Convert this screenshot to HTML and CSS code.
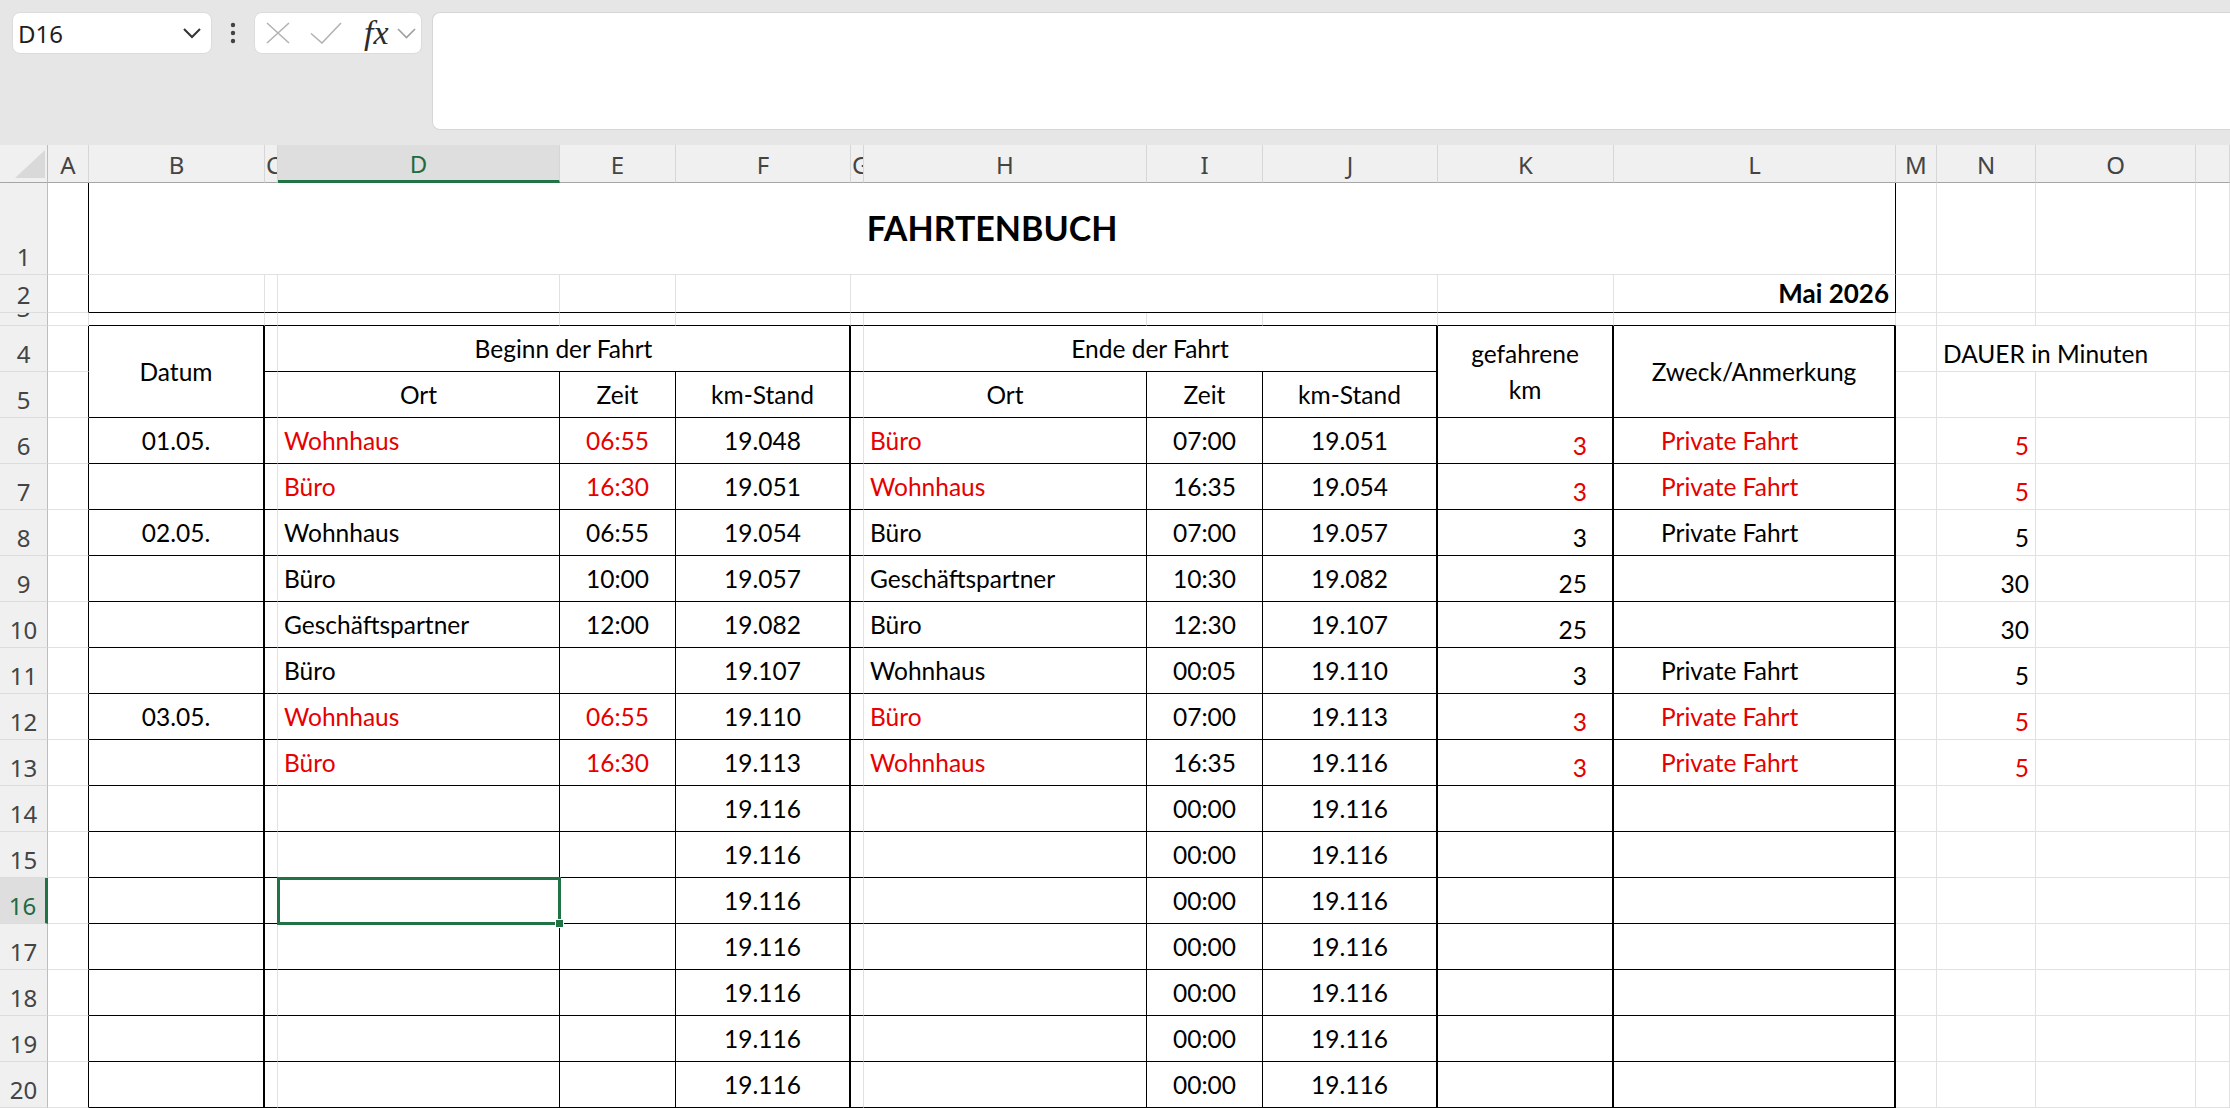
FILE: index.html
```html
<!DOCTYPE html>
<html lang="de">
<head>
    <meta charset="UTF-8">
    <meta name="viewport" content="width=device-width, initial-scale=1.0">
    <title>Fahrtenbuch</title>
    <link rel="stylesheet" href="styles.css">
</head>
<body>
    <!-- Formula bar -->
    <div class="toolbar">
        <div class="namebox">
            <span>D16</span>
            <svg width="20" height="12" viewBox="0 0 20 12"><path d="M2 2 L10 10 L18 2" fill="none" stroke="#333" stroke-width="2"/></svg>
        </div>
        <div class="grip">
            <svg width="6" height="22" viewBox="0 0 6 22"><circle cx="3" cy="3" r="2.2"/><circle cx="3" cy="11" r="2.2"/><circle cx="3" cy="19" r="2.2"/></svg>
        </div>
        <div class="fxbox">
            <svg class="ic-x" width="24" height="22" viewBox="0 0 24 22"><path d="M1 1 L23 21 M23 1 L1 21" fill="none" stroke="#b3b3b3" stroke-width="1.6"/></svg>
            <svg class="ic-ok" width="32" height="22" viewBox="0 0 32 22"><path d="M1 11.5 L12 21 L31 1" fill="none" stroke="#b3b3b3" stroke-width="1.6"/></svg>
            <span class="fx">fx</span>
            <svg class="ic-down" width="19" height="11" viewBox="0 0 19 11"><path d="M1 1 L9.5 9.5 L18 1" fill="none" stroke="#9e9e9e" stroke-width="1.6"/></svg>
        </div>
        <div class="formula"></div>
    </div>

    <!-- Sheet -->
    <div class="sheet">
        <!-- Column headers -->
        <div class="row">
            <div class="corner"><svg width="30" height="28" viewBox="0 0 30 28"><polygon points="30,0 30,28 0,28" fill="#d9d9d9"/></svg></div>
            <div class="ch">A</div>
            <div class="ch">B</div>
            <div class="ch narrow">C</div>
            <div class="ch active">D</div>
            <div class="ch">E</div>
            <div class="ch">F</div>
            <div class="ch narrow">G</div>
            <div class="ch">H</div>
            <div class="ch">I</div>
            <div class="ch">J</div>
            <div class="ch">K</div>
            <div class="ch">L</div>
            <div class="ch">M</div>
            <div class="ch">N</div>
            <div class="ch">O</div>
            <div class="ch"></div>
        </div>

        <!-- Row 1: title -->
        <div class="row">
            <div class="rh">1</div>
            <div class="c br"></div>
            <div class="c br span11 title">FAHRTENBUCH</div>
            <div class="c"></div>
            <div class="c"></div>
            <div class="c"></div>
            <div class="c"></div>
        </div>

        <!-- Row 2: month -->
        <div class="row">
            <div class="rh">2</div>
            <div class="c br"></div>
            <div class="c bb"></div>
            <div class="c bb"></div>
            <div class="c bb"></div>
            <div class="c bb"></div>
            <div class="c bb"></div>
            <div class="c bb span4"></div>
            <div class="c bb"></div>
            <div class="c bb br bot month">Mai 2026</div>
            <div class="c"></div>
            <div class="c"></div>
            <div class="c"></div>
            <div class="c"></div>
        </div>

        <!-- Row 3: spacer -->
        <div class="row">
            <div class="rh">3</div>
            <div class="c"></div>
            <div class="c bb"></div>
            <div class="c bb"></div>
            <div class="c bb"></div>
            <div class="c bb"></div>
            <div class="c bb"></div>
            <div class="c bb"></div>
            <div class="c bb"></div>
            <div class="c bb"></div>
            <div class="c bb"></div>
            <div class="c bb"></div>
            <div class="c bb"></div>
            <div class="c"></div>
            <div class="c"></div>
            <div class="c"></div>
            <div class="c"></div>
        </div>

        <!-- Row 4: group headers -->
        <div class="row">
            <div class="rh">4</div>
            <div class="c br"></div>
            <div class="c bb brw ctr tall">Datum</div>
            <div class="c bb"></div>
            <div class="c bb brw ctr span3">Beginn der Fahrt</div>
            <div class="c bb"></div>
            <div class="c bb brw ctr span3">Ende der Fahrt</div>
            <div class="c bb brw ctr tall wrap"><span>gefahrene<br>km</span></div>
            <div class="c bb brw ctr tall">Zweck/Anmerkung</div>
            <div class="c"></div>
            <div class="c bot span2">DAUER in Minuten</div>
            <div class="c"></div>
        </div>

        <!-- Row 5: column headers -->
        <div class="row">
            <div class="rh">5</div>
            <div class="c br"></div>
            <div class="c bb"></div>
            <div class="c bb br ctr">Ort</div>
            <div class="c bb br ctr">Zeit</div>
            <div class="c bb brw ctr">km-Stand</div>
            <div class="c bb"></div>
            <div class="c bb br ctr">Ort</div>
            <div class="c bb br ctr">Zeit</div>
            <div class="c bb brw ctr">km-Stand</div>
            <div class="c"></div>
            <div class="c"></div>
            <div class="c"></div>
            <div class="c"></div>
        </div>

        <!-- Row 6 -->
        <div class="row">
            <div class="rh">6</div>
            <div class="c br"></div>
            <div class="c bb brw ctr">01.05.</div>
            <div class="c bb"></div>
            <div class="c bb br red">Wohnhaus</div>
            <div class="c bb br ctr red">06:55</div>
            <div class="c bb brw ctr">19.048</div>
            <div class="c bb"></div>
            <div class="c bb br red">Büro</div>
            <div class="c bb br ctr">07:00</div>
            <div class="c bb brw ctr">19.051</div>
            <div class="c bb brw bot km red">3</div>
            <div class="c bb brw note red">Private Fahrt</div>
            <div class="c"></div>
            <div class="c bot rgt red">5</div>
            <div class="c"></div>
            <div class="c"></div>
        </div>

        <!-- Row 7 -->
        <div class="row">
            <div class="rh">7</div>
            <div class="c br"></div>
            <div class="c bb brw ctr"></div>
            <div class="c bb"></div>
            <div class="c bb br red">Büro</div>
            <div class="c bb br ctr red">16:30</div>
            <div class="c bb brw ctr">19.051</div>
            <div class="c bb"></div>
            <div class="c bb br red">Wohnhaus</div>
            <div class="c bb br ctr">16:35</div>
            <div class="c bb brw ctr">19.054</div>
            <div class="c bb brw bot km red">3</div>
            <div class="c bb brw note red">Private Fahrt</div>
            <div class="c"></div>
            <div class="c bot rgt red">5</div>
            <div class="c"></div>
            <div class="c"></div>
        </div>

        <!-- Row 8 -->
        <div class="row">
            <div class="rh">8</div>
            <div class="c br"></div>
            <div class="c bb brw ctr">02.05.</div>
            <div class="c bb"></div>
            <div class="c bb br">Wohnhaus</div>
            <div class="c bb br ctr">06:55</div>
            <div class="c bb brw ctr">19.054</div>
            <div class="c bb"></div>
            <div class="c bb br">Büro</div>
            <div class="c bb br ctr">07:00</div>
            <div class="c bb brw ctr">19.057</div>
            <div class="c bb brw bot km">3</div>
            <div class="c bb brw note">Private Fahrt</div>
            <div class="c"></div>
            <div class="c bot rgt">5</div>
            <div class="c"></div>
            <div class="c"></div>
        </div>

        <!-- Row 9 -->
        <div class="row">
            <div class="rh">9</div>
            <div class="c br"></div>
            <div class="c bb brw ctr"></div>
            <div class="c bb"></div>
            <div class="c bb br">Büro</div>
            <div class="c bb br ctr">10:00</div>
            <div class="c bb brw ctr">19.057</div>
            <div class="c bb"></div>
            <div class="c bb br">Geschäftspartner</div>
            <div class="c bb br ctr">10:30</div>
            <div class="c bb brw ctr">19.082</div>
            <div class="c bb brw bot km">25</div>
            <div class="c bb brw note"></div>
            <div class="c"></div>
            <div class="c bot rgt">30</div>
            <div class="c"></div>
            <div class="c"></div>
        </div>

        <!-- Row 10 -->
        <div class="row">
            <div class="rh">10</div>
            <div class="c br"></div>
            <div class="c bb brw ctr"></div>
            <div class="c bb"></div>
            <div class="c bb br">Geschäftspartner</div>
            <div class="c bb br ctr">12:00</div>
            <div class="c bb brw ctr">19.082</div>
            <div class="c bb"></div>
            <div class="c bb br">Büro</div>
            <div class="c bb br ctr">12:30</div>
            <div class="c bb brw ctr">19.107</div>
            <div class="c bb brw bot km">25</div>
            <div class="c bb brw note"></div>
            <div class="c"></div>
            <div class="c bot rgt">30</div>
            <div class="c"></div>
            <div class="c"></div>
        </div>

        <!-- Row 11 -->
        <div class="row">
            <div class="rh">11</div>
            <div class="c br"></div>
            <div class="c bb brw ctr"></div>
            <div class="c bb"></div>
            <div class="c bb br">Büro</div>
            <div class="c bb br ctr"></div>
            <div class="c bb brw ctr">19.107</div>
            <div class="c bb"></div>
            <div class="c bb br">Wohnhaus</div>
            <div class="c bb br ctr">00:05</div>
            <div class="c bb brw ctr">19.110</div>
            <div class="c bb brw bot km">3</div>
            <div class="c bb brw note">Private Fahrt</div>
            <div class="c"></div>
            <div class="c bot rgt">5</div>
            <div class="c"></div>
            <div class="c"></div>
        </div>

        <!-- Row 12 -->
        <div class="row">
            <div class="rh">12</div>
            <div class="c br"></div>
            <div class="c bb brw ctr">03.05.</div>
            <div class="c bb"></div>
            <div class="c bb br red">Wohnhaus</div>
            <div class="c bb br ctr red">06:55</div>
            <div class="c bb brw ctr">19.110</div>
            <div class="c bb"></div>
            <div class="c bb br red">Büro</div>
            <div class="c bb br ctr">07:00</div>
            <div class="c bb brw ctr">19.113</div>
            <div class="c bb brw bot km red">3</div>
            <div class="c bb brw note red">Private Fahrt</div>
            <div class="c"></div>
            <div class="c bot rgt red">5</div>
            <div class="c"></div>
            <div class="c"></div>
        </div>

        <!-- Row 13 -->
        <div class="row">
            <div class="rh">13</div>
            <div class="c br"></div>
            <div class="c bb brw ctr"></div>
            <div class="c bb"></div>
            <div class="c bb br red">Büro</div>
            <div class="c bb br ctr red">16:30</div>
            <div class="c bb brw ctr">19.113</div>
            <div class="c bb"></div>
            <div class="c bb br red">Wohnhaus</div>
            <div class="c bb br ctr">16:35</div>
            <div class="c bb brw ctr">19.116</div>
            <div class="c bb brw bot km red">3</div>
            <div class="c bb brw note red">Private Fahrt</div>
            <div class="c"></div>
            <div class="c bot rgt red">5</div>
            <div class="c"></div>
            <div class="c"></div>
        </div>

        <!-- Row 14 -->
        <div class="row">
            <div class="rh">14</div>
            <div class="c br"></div>
            <div class="c bb brw"></div>
            <div class="c bb"></div>
            <div class="c bb br"></div>
            <div class="c bb br"></div>
            <div class="c bb brw ctr">19.116</div>
            <div class="c bb"></div>
            <div class="c bb br"></div>
            <div class="c bb br ctr">00:00</div>
            <div class="c bb brw ctr">19.116</div>
            <div class="c bb brw"></div>
            <div class="c bb brw"></div>
            <div class="c"></div>
            <div class="c"></div>
            <div class="c"></div>
            <div class="c"></div>
        </div>

        <!-- Row 15 -->
        <div class="row">
            <div class="rh">15</div>
            <div class="c br"></div>
            <div class="c bb brw"></div>
            <div class="c bb"></div>
            <div class="c bb br"></div>
            <div class="c bb br"></div>
            <div class="c bb brw ctr">19.116</div>
            <div class="c bb"></div>
            <div class="c bb br"></div>
            <div class="c bb br ctr">00:00</div>
            <div class="c bb brw ctr">19.116</div>
            <div class="c bb brw"></div>
            <div class="c bb brw"></div>
            <div class="c"></div>
            <div class="c"></div>
            <div class="c"></div>
            <div class="c"></div>
        </div>

        <!-- Row 16 (selected cell D16) -->
        <div class="row">
            <div class="rh active">16</div>
            <div class="c br"></div>
            <div class="c bb brw"></div>
            <div class="c bb"></div>
            <div class="c bb br selected"><div class="selection"></div><div class="handle"></div></div>
            <div class="c bb br"></div>
            <div class="c bb brw ctr">19.116</div>
            <div class="c bb"></div>
            <div class="c bb br"></div>
            <div class="c bb br ctr">00:00</div>
            <div class="c bb brw ctr">19.116</div>
            <div class="c bb brw"></div>
            <div class="c bb brw"></div>
            <div class="c"></div>
            <div class="c"></div>
            <div class="c"></div>
            <div class="c"></div>
        </div>

        <!-- Row 17 -->
        <div class="row">
            <div class="rh">17</div>
            <div class="c br"></div>
            <div class="c bb brw"></div>
            <div class="c bb"></div>
            <div class="c bb br"></div>
            <div class="c bb br"></div>
            <div class="c bb brw ctr">19.116</div>
            <div class="c bb"></div>
            <div class="c bb br"></div>
            <div class="c bb br ctr">00:00</div>
            <div class="c bb brw ctr">19.116</div>
            <div class="c bb brw"></div>
            <div class="c bb brw"></div>
            <div class="c"></div>
            <div class="c"></div>
            <div class="c"></div>
            <div class="c"></div>
        </div>

        <!-- Row 18 -->
        <div class="row">
            <div class="rh">18</div>
            <div class="c br"></div>
            <div class="c bb brw"></div>
            <div class="c bb"></div>
            <div class="c bb br"></div>
            <div class="c bb br"></div>
            <div class="c bb brw ctr">19.116</div>
            <div class="c bb"></div>
            <div class="c bb br"></div>
            <div class="c bb br ctr">00:00</div>
            <div class="c bb brw ctr">19.116</div>
            <div class="c bb brw"></div>
            <div class="c bb brw"></div>
            <div class="c"></div>
            <div class="c"></div>
            <div class="c"></div>
            <div class="c"></div>
        </div>

        <!-- Row 19 -->
        <div class="row">
            <div class="rh">19</div>
            <div class="c br"></div>
            <div class="c bb brw"></div>
            <div class="c bb"></div>
            <div class="c bb br"></div>
            <div class="c bb br"></div>
            <div class="c bb brw ctr">19.116</div>
            <div class="c bb"></div>
            <div class="c bb br"></div>
            <div class="c bb br ctr">00:00</div>
            <div class="c bb brw ctr">19.116</div>
            <div class="c bb brw"></div>
            <div class="c bb brw"></div>
            <div class="c"></div>
            <div class="c"></div>
            <div class="c"></div>
            <div class="c"></div>
        </div>

        <!-- Row 20 -->
        <div class="row">
            <div class="rh">20</div>
            <div class="c br"></div>
            <div class="c bb brw"></div>
            <div class="c bb"></div>
            <div class="c bb br"></div>
            <div class="c bb br"></div>
            <div class="c bb brw ctr">19.116</div>
            <div class="c bb"></div>
            <div class="c bb br"></div>
            <div class="c bb br ctr">00:00</div>
            <div class="c bb brw ctr">19.116</div>
            <div class="c bb brw"></div>
            <div class="c bb brw"></div>
            <div class="c"></div>
            <div class="c"></div>
            <div class="c"></div>
            <div class="c"></div>
        </div>
    </div>
</body>
</html>
```

FILE: styles.css
```css
/* Basic reset */
* {
    margin: 0;
    padding: 0;
    box-sizing: border-box;
}

body {
    width: 2230px;
    height: 1108px;
    overflow: hidden;
    background-color: #FFFFFF;
    font-family: Lato, 'Liberation Sans', sans-serif;
}

/* Formula bar */
.toolbar {
    display: flex;
    align-items: flex-start;
    height: 145px;
    padding: 12px 0 0 12px;
    background-color: #E6E6E6;
}

.namebox {
    display: flex;
    align-items: center;
    justify-content: space-between;
    width: 200px;
    height: 42px;
    padding: 0 9px 0 5px;
    background-color: #FFFFFF;
    border: 1px solid #DCDCDC;
    border-radius: 8px;
    font-family: 'Noto Sans', sans-serif;
    font-size: 24px;
    color: #1F1F1F;
}

.grip {
    display: flex;
    align-items: center;
    justify-content: center;
    width: 42px;
    height: 42px;
    fill: #424242;
}

.fxbox {
    display: flex;
    align-items: center;
    width: 168px;
    height: 42px;
    padding-left: 11px;
    background-color: #FFFFFF;
    border: 1px solid #DCDCDC;
    border-radius: 8px;
}

.ic-ok {
    margin-left: 20px;
}

.fx {
    margin-left: 22px;
    font-family: 'Liberation Serif', serif;
    font-style: italic;
    font-size: 34px;
    line-height: 1;
    color: #2B2B2B;
}

.ic-down {
    margin-left: 8px;
}

.formula {
    flex: 1;
    height: 118px;
    margin-left: 10px;
    background-color: #FFFFFF;
    border: 1px solid #D6D6D6;
    border-right: none;
    border-radius: 8px 0 0 8px;
}

/* Spreadsheet grid */
.sheet {
    display: grid;
    grid-template-columns: 48px 41px 176px 13px 282px 116px 175px 13px 283px 116px 175px 176px 282px 41px 99px 160px 34px;
    grid-template-rows: 38px 92px 38px 13px repeat(17, 46px);
}

.row {
    display: contents;
}

/* Column and row headers */
.corner {
    display: flex;
    align-items: flex-end;
    justify-content: flex-end;
    padding: 0 2px 4px 0;
    background-color: #F0F0F0;
    border-right: 1px solid #BDBDBD;
    border-bottom: 1px solid #A6A6A6;
}

.ch {
    display: flex;
    align-items: center;
    justify-content: center;
    padding-top: 2px;
    overflow: hidden;
    background-color: #F0F0F0;
    border-right: 1px solid #D6D6D6;
    border-bottom: 1px solid #A6A6A6;
    font-family: 'Noto Sans', sans-serif;
    font-size: 24px;
    line-height: 24px;
    color: #444444;
}

.ch.narrow {
    justify-content: flex-start;
    padding-left: 1px;
}

.ch.active {
    background-color: #DEDEDE;
    color: #1E6B41;
    border-bottom: 3px solid #217346;
}

.rh {
    display: flex;
    align-items: flex-end;
    justify-content: center;
    padding-bottom: 5px;
    overflow: hidden;
    background-color: #F0F0F0;
    border-right: 1px solid #BDBDBD;
    border-bottom: 1px solid #DCDCDC;
    font-family: 'Noto Sans', sans-serif;
    font-size: 24px;
    line-height: 24px;
    color: #444444;
}

.rh.active {
    background-color: #DEDEDE;
    color: #1E6B41;
    border-right: 3px solid #217346;
}

/* Cells */
.c {
    display: flex;
    align-items: center;
    min-width: 0;
    padding: 0 6px;
    overflow: hidden;
    white-space: nowrap;
    border-right: 1px solid #E1E1E1;
    border-bottom: 1px solid #E1E1E1;
    font-size: 24.5px;
    line-height: 1.2;
    color: #000000;
}

.bb { border-bottom-color: #000000; }
.br { border-right-color: #000000; }
.brw { border-right: 2px solid #000000; }

.ctr { justify-content: center; }
.rgt { justify-content: flex-end; }
.bot { align-items: flex-end; padding-bottom: 3px; }
.red { color: #E60000; }

.span2 { grid-column: span 2; }
.span3 { grid-column: span 3; }
.span4 { grid-column: span 4; }
.span11 { grid-column: span 11; }
.tall { grid-row: span 2; }

.title {
    justify-content: center;
    font-size: 34px;
    font-weight: 700;
}

.month {
    justify-content: flex-end;
    font-size: 26px;
    font-weight: 700;
}

.wrap span {
    text-align: center;
    line-height: 36px;
}

/* km driven and purpose columns */
.km {
    justify-content: flex-end;
    padding-right: 25px;
}

.note {
    padding-left: 47px;
}

/* Active cell outline */
.selected {
    position: relative;
    overflow: visible;
}

.selection {
    position: absolute;
    left: -1px;
    top: -1px;
    right: -2px;
    bottom: -2px;
    border: 3px solid #217346;
}

.handle {
    position: absolute;
    right: -5px;
    bottom: -5px;
    width: 9px;
    height: 9px;
    background-color: #217346;
    border: 1px solid #FFFFFF;
}
```
